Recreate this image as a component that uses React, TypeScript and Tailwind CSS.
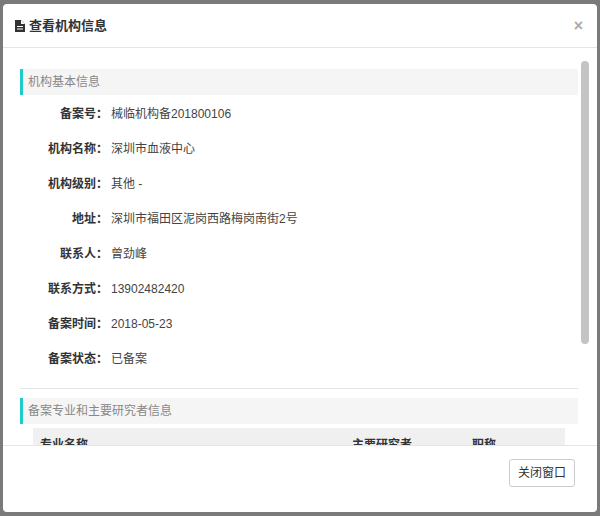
import React from "react";

const rows: [string, string][] = [
  ["备案号：", "械临机构备201800106"],
  ["机构名称：", "深圳市血液中心"],
  ["机构级别：", "其他 -"],
  ["地址：", "深圳市福田区泥岗西路梅岗南街2号"],
  ["联系人：", "曾劲峰"],
  ["联系方式：", "13902482420"],
  ["备案时间：", "2018-05-23"],
  ["备案状态：", "已备案"],
];

export default function App() {
  return (
    <div className="w-[600px] h-[516px] bg-[#7a7a7a] pt-[4px] pl-[3px] overflow-hidden" style={{ fontFamily: '"Liberation Sans", "Noto Sans CJK SC", sans-serif' }}>
      <div className="w-[594px] h-[508px] bg-white rounded-[4px] flex flex-col overflow-hidden">
        <div className="h-[44px] flex items-center px-[12px] border-b border-[#e5e5e5] shrink-0">
          <svg width="10" height="12" viewBox="0 0 10 12" className="mr-[4px]">
            <path d="M0 0h6l4 4v8H0z" fill="#333" />
            <path d="M6 0v4h4" fill="#fff" />
            <rect x="2" y="6" width="6" height="1" fill="#fff" />
            <rect x="2" y="8.5" width="6" height="1" fill="#fff" />
          </svg>
          <span className="text-[13px] font-bold text-[#333]">查看机构信息</span>
          <span className="ml-auto text-[#aaa] text-[16px] font-bold mr-[2px]">×</span>
        </div>
        <div className="h-[397px] relative overflow-hidden shrink-0">
          <div className="absolute right-[8px] top-[13px] w-[8px] h-[283px] rounded-full bg-[#c4c4c4]" />
          <div className="pl-[17px] pr-[19px] pt-[21px]">
            <div className="h-[26px] bg-[#f5f5f5] border-l-[3px] border-[#1ecbc9] flex items-center pl-[5px] text-[12px] text-[#888]">机构基本信息</div>
            <div className="pt-[1px]">
              {rows.map(([k, v]) => (
                <div key={k} className="h-[35px] flex items-center text-[12px]">
                  <div className="w-[88px] text-right font-bold text-[#333]">{k}</div>
                  <div className="pl-[3px] text-[#444]">{v}</div>
                </div>
              ))}
            </div>
            <div className="mt-[12px] border-t border-[#e5e5e5]" />
            <div className="mt-[9px] h-[26px] bg-[#f5f5f5] border-l-[3px] border-[#1ecbc9] flex items-center pl-[5px] text-[12px] text-[#888]">备案专业和主要研究者信息</div>
            <div className="mx-[13px] mt-[4px] h-[30px] bg-[#f0f0f0] flex items-end pb-[4px] text-[12px] font-bold text-[#333]">
              <div className="w-[319px] pl-[7px]">专业名称</div>
              <div className="w-[120px]">主要研究者</div>
              <div>职称</div>
            </div>
          </div>
        </div>
        <div className="border-t border-[#e5e5e5] flex justify-end pt-[13px] pr-[22px]">
          <button className="w-[66px] h-[28px] border border-[#ccc] rounded-[3px] text-[12px] text-[#333] bg-white">关闭窗口</button>
        </div>
      </div>
    </div>
  );
}
